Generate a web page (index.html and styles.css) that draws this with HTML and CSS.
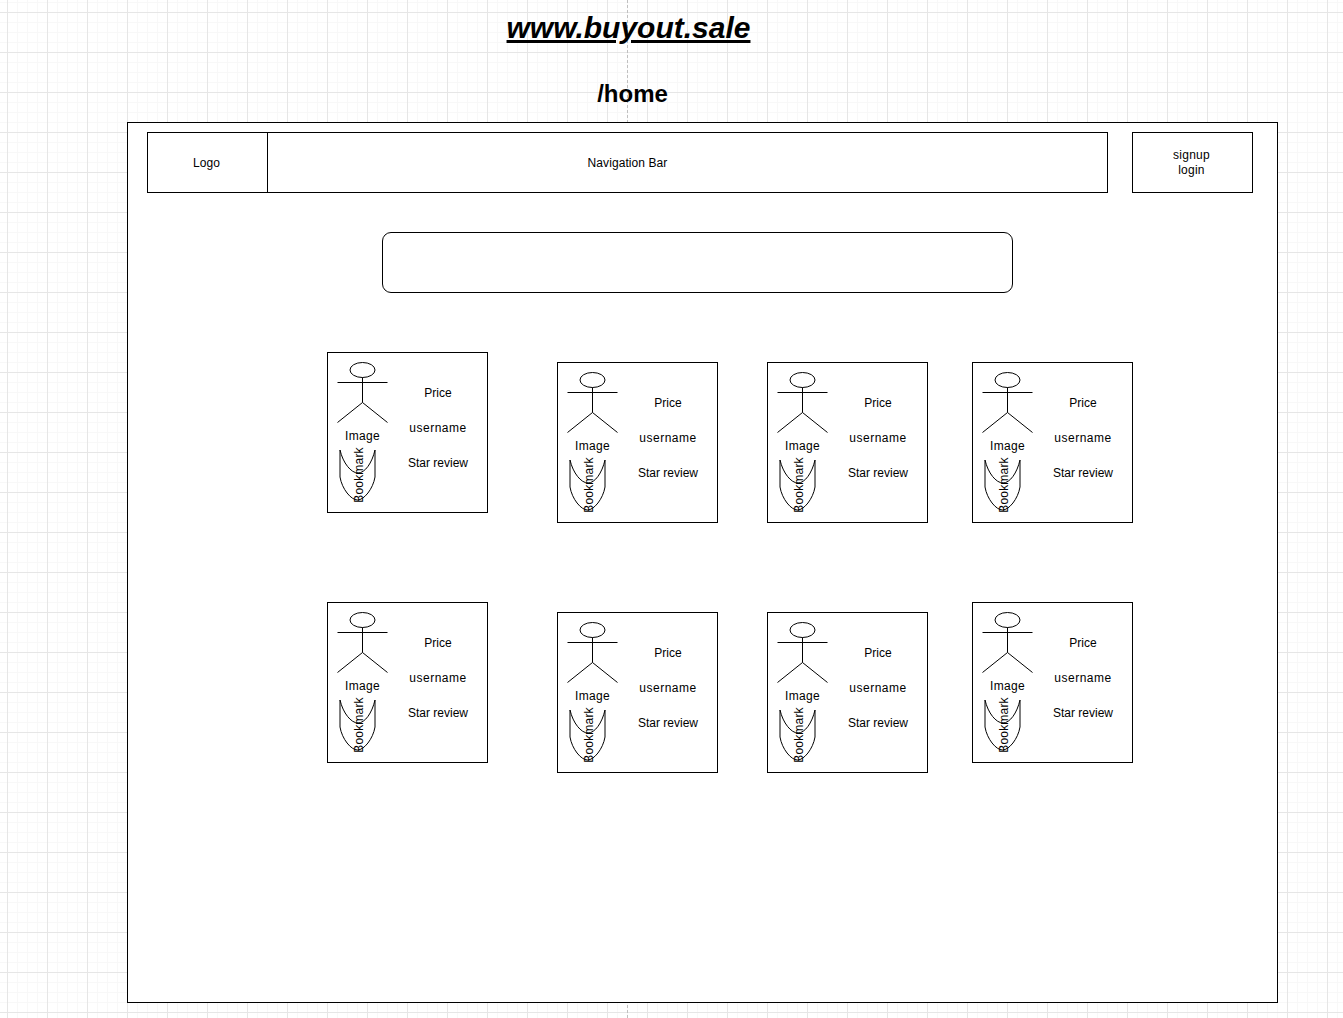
FILE: index.html
```html
<!DOCTYPE html>
<html>
<head>
	<title>www.buyout.sale /home</title>
	<meta charset="utf-8">
	<link rel="stylesheet" href="styles.css">
</head>
<body>
	<svg class="defs" width="0" height="0">
		<g id="sketch">
			<!-- stick figure, x/y are relative to the card's inner box -->
			<ellipse cx="34.5" cy="17" rx="12.5" ry="7.5"/>
			<path d="M34.5 24.5V49.5M9.5 29.5H59.5M34.5 49.5L9.5 69.5M34.5 49.5L59.5 69.5"/>
			<!-- bookmark -->
			<path d="M12 97C15 110 23 120 30 120S44 110 47 97M12 97V124C14 136 23 147 29.5 147S45 136 47 124V97"/>
		</g>
	</svg>

	<div class="page-line"></div>

	<h1 class="site-title">www.buyout.sale</h1>
	<h2 class="page-title">/home</h2>

	<div class="frame">
		<div class="box nav-box">Navigation Bar</div>
		<div class="box logo-box">Logo</div>
		<div class="box auth-box">signup<br>login</div>
		<div class="box search-box"></div>

		<div class="box card card-a1">
			<svg class="figure"><use href="#sketch"/></svg>
			<span class="image-label">Image</span>
			<span class="bookmark-label">Bookmark</span>
			<div class="card-info"><span>Price</span><span class="username">username</span><span>Star review</span></div>
		</div>
		<div class="box card card-a2">
			<svg class="figure"><use href="#sketch"/></svg>
			<span class="image-label">Image</span>
			<span class="bookmark-label">Bookmark</span>
			<div class="card-info"><span>Price</span><span class="username">username</span><span>Star review</span></div>
		</div>
		<div class="box card card-a3">
			<svg class="figure"><use href="#sketch"/></svg>
			<span class="image-label">Image</span>
			<span class="bookmark-label">Bookmark</span>
			<div class="card-info"><span>Price</span><span class="username">username</span><span>Star review</span></div>
		</div>
		<div class="box card card-a4">
			<svg class="figure"><use href="#sketch"/></svg>
			<span class="image-label">Image</span>
			<span class="bookmark-label">Bookmark</span>
			<div class="card-info"><span>Price</span><span class="username">username</span><span>Star review</span></div>
		</div>
		<div class="box card card-b1">
			<svg class="figure"><use href="#sketch"/></svg>
			<span class="image-label">Image</span>
			<span class="bookmark-label">Bookmark</span>
			<div class="card-info"><span>Price</span><span class="username">username</span><span>Star review</span></div>
		</div>
		<div class="box card card-b2">
			<svg class="figure"><use href="#sketch"/></svg>
			<span class="image-label">Image</span>
			<span class="bookmark-label">Bookmark</span>
			<div class="card-info"><span>Price</span><span class="username">username</span><span>Star review</span></div>
		</div>
		<div class="box card card-b3">
			<svg class="figure"><use href="#sketch"/></svg>
			<span class="image-label">Image</span>
			<span class="bookmark-label">Bookmark</span>
			<div class="card-info"><span>Price</span><span class="username">username</span><span>Star review</span></div>
		</div>
		<div class="box card card-b4">
			<svg class="figure"><use href="#sketch"/></svg>
			<span class="image-label">Image</span>
			<span class="bookmark-label">Bookmark</span>
			<div class="card-info"><span>Price</span><span class="username">username</span><span>Star review</span></div>
		</div>
	</div>
</body>
</html>
```

FILE: styles.css
```css
html,body{
	margin:0;
	height:1018px;
	overflow:hidden;
}

body{
	position:relative;
	font-family:"Liberation Sans",Arial,sans-serif;
	font-size:12px;
	color:#000;
	background-color:#fff;
	background-image:
		linear-gradient(#e6e6e6 1px,transparent 1px),
		linear-gradient(90deg,#e6e6e6 1px,transparent 1px),
		linear-gradient(#f8f8f8 1px,transparent 1px),
		linear-gradient(90deg,#f8f8f8 1px,transparent 1px);
	background-size:40px 40px,40px 40px,10px 10px,10px 10px;
	background-position:0 12px,7px 0,0 2px,7px 0;
}

.defs{
	position:absolute;
}

/* the dashed page break of the drawing canvas */
.page-line{
	position:absolute;
	left:627px;
	top:0;
	height:1018px;
	border-left:1px dashed #c0c0c0;
}

.site-title{
	position:absolute;
	left:428.5px;
	top:10px;
	width:400px;
	margin:0;
	font-size:30px;
	font-style:italic;
	font-weight:bold;
	line-height:36px;
	text-align:center;
	text-decoration:underline;
}

.page-title{
	position:absolute;
	left:532.5px;
	top:79.5px;
	width:200px;
	margin:0;
	font-size:24px;
	font-weight:bold;
	line-height:28px;
	text-align:center;
}

.frame{
	position:absolute;
	left:127px;
	top:122px;
	width:1151px;
	height:881px;
	box-sizing:border-box;
	border:1px solid #000;
	background:#fff;
}

.box{
	position:absolute;
	box-sizing:border-box;
	border:1px solid #000;
	display:flex;
	align-items:center;
	justify-content:center;
	text-align:center;
	line-height:15px;
}

/* nav bar runs under the logo box, its label is centred on the whole width */
.nav-box{
	left:19px;
	top:9px;
	width:961px;
	height:61px;
	padding-top:1px;
	letter-spacing:.08px;
}

.logo-box{
	left:19px;
	top:9px;
	width:121px;
	height:61px;
	padding:1px 2px 0 0;
	letter-spacing:.1px;
}

.auth-box{
	left:1004px;
	top:9px;
	width:121px;
	height:61px;
	padding-right:2px;
	letter-spacing:.25px;
}

.search-box{
	left:254px;
	top:109px;
	width:631px;
	height:61px;
	border-radius:9px;
}

.card{
	width:161px;
	height:161px;
	justify-content:flex-end;
}

.card-a1{left:199px;top:229px;}
.card-a2{left:429px;top:239px;}
.card-a3{left:639px;top:239px;}
.card-a4{left:844px;top:239px;}
.card-b1{left:199px;top:479px;}
.card-b2{left:429px;top:489px;}
.card-b3{left:639px;top:489px;}
.card-b4{left:844px;top:479px;}

.figure{
	position:absolute;
	left:0;
	top:0;
	width:70px;
	height:159px;
	overflow:visible;
}

.figure use{
	fill:none;
	stroke:#000;
	stroke-width:1;
}

.image-label{
	position:absolute;
	left:0;
	top:76px;
	width:69px;
	line-height:14px;
	letter-spacing:.3px;
}

.bookmark-label{
	position:absolute;
	left:3px;
	top:115px;
	width:56px;
	line-height:14px;
	letter-spacing:.2px;
	transform:rotate(-90deg);
}

.card-info{
	width:100px;
	margin-right:-1px;
	margin-top:-9px;
	display:flex;
	flex-direction:column;
	gap:20px;
}

.username{
	letter-spacing:.5px;
}
```
